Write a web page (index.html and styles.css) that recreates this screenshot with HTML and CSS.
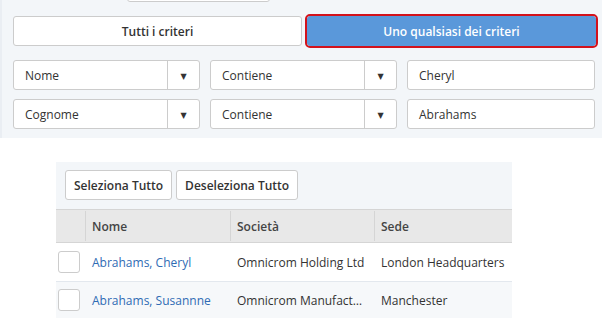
FILE: index.html
```html
<!DOCTYPE html>
<html>
<head>
    <title>Ricerca contatti</title>
    <link rel="stylesheet" href="styles.css">
</head>
<body>
    <div class="filter-panel">
        <div class="prev-btn"></div>

        <div class="match-toggle">
            <button class="toggle-btn">Tutti i criteri</button>
            <button class="toggle-btn active">Uno qualsiasi dei criteri</button>
        </div>

        <div class="criteria">
            <div class="criteria-row">
                <div class="select"><span class="select-label">Nome</span><span class="select-arrow">&#9660;</span></div>
                <div class="select"><span class="select-label">Contiene</span><span class="select-arrow">&#9660;</span></div>
                <div class="text-input">Cheryl</div>
            </div>
            <div class="criteria-row">
                <div class="select"><span class="select-label">Cognome</span><span class="select-arrow">&#9660;</span></div>
                <div class="select"><span class="select-label">Contiene</span><span class="select-arrow">&#9660;</span></div>
                <div class="text-input">Abrahams</div>
            </div>
        </div>
    </div>

    <div class="results">
        <div class="toolbar">
            <button class="tool-btn">Seleziona Tutto</button>
            <button class="tool-btn">Deseleziona Tutto</button>
        </div>
        <table class="grid">
            <colgroup>
                <col class="col-check">
                <col class="col-name">
                <col class="col-company">
                <col class="col-site">
            </colgroup>
            <thead>
                <tr>
                    <th></th>
                    <th>Nome</th>
                    <th>Società</th>
                    <th>Sede</th>
                </tr>
            </thead>
            <tbody>
                <tr class="row-first">
                    <td class="cell-check"><span class="checkbox"></span></td>
                    <td><a href="#">Abrahams, Cheryl</a></td>
                    <td>Omnicrom Holding Ltd</td>
                    <td>London Headquarters</td>
                </tr>
                <tr class="row-alt">
                    <td class="cell-check"><span class="checkbox"></span></td>
                    <td><a href="#">Abrahams, Susannne</a></td>
                    <td>Omnicrom Manufacturing Ltd</td>
                    <td>Manchester</td>
                </tr>
            </tbody>
        </table>
    </div>
</body>
</html>
```

FILE: styles.css
```css
body {
    margin: 0;
    font-family: "Open Sans", "DejaVu Sans", sans-serif;
    font-size: 12px;
    color: #333;
    background: #fff;
}
.filter-panel {
    background: #f3f6f9;
    border-left: 2px solid #eaeef3;
    padding: 0 6px 9px 11px;
}
.prev-btn {
    width: 141px;
    height: 28px;
    margin: -28px 0 0 114px;
    background: #fff;
    border: 1px solid #ccc;
    border-radius: 3px;
}
.match-toggle {
    display: grid;
    grid-template-columns: 1fr 1fr;
    gap: 5px;
    margin-top: 14px;
}
.toggle-btn {
    height: 30px;
    font-family: inherit;
    font-size: 12px;
    font-weight: 600;
    color: #333;
    background: #fff;
    border: 1px solid #ccc;
    border-radius: 3px;
}
.toggle-btn.active {
    background: #5a98da;
    border-color: #5a98da;
    color: #fff;
    outline: 2px solid #d3121b;
    outline-offset: 0;
}
.criteria {
    margin-top: 14px;
    display: flex;
    flex-direction: column;
    gap: 9px;
}
.criteria-row {
    display: grid;
    grid-template-columns: 187px 187px 188px;
    gap: 10px;
}
.select, .text-input {
    height: 30px;
    box-sizing: border-box;
    background: #fff;
    border: 1px solid #ccc;
    border-radius: 3px;
    display: flex;
    align-items: center;
}
.select-label {
    flex: 1;
    padding-left: 11px;
}
.select-arrow {
    width: 31px;
    height: 100%;
    border-left: 1px solid #ccc;
    display: flex;
    align-items: center;
    justify-content: center;
    font-size: 8px;
    color: #333;
}
.text-input {
    padding-left: 11px;
}
.results {
    width: 456px;
    margin: 24px 0 0 56px;
}
.toolbar {
    background: #f3f6f9;
    padding: 8px 9px 9px;
    display: flex;
    gap: 4px;
}
.tool-btn {
    height: 30px;
    padding: 0 8px;
    font-family: inherit;
    font-size: 12px;
    font-weight: 600;
    color: #333;
    background: #fff;
    border: 1px solid #ccc;
    border-radius: 3px;
}
.grid {
    width: 456px;
    border-collapse: collapse;
    table-layout: fixed;
}
.col-check { width: 29px; }
.col-name { width: 145px; }
.col-company { width: 144px; }
.col-site { width: 138px; }
.grid th {
    height: 32px;
    background: #e8e8e8;
    border-top: 1px solid #d5d5d5;
    border-bottom: 1px solid #d5d5d5;
    text-align: left;
    font-weight: 600;
    color: #444;
    padding: 0 7px;
    background-image: linear-gradient(#d5d5d5, #d5d5d5);
    background-size: 1px 30px;
    background-position: 0 center;
    background-repeat: no-repeat;
}
.grid th:first-child {
    background-image: none;
}
.grid td {
    padding: 0 7px;
    white-space: nowrap;
    overflow: hidden;
    text-overflow: ellipsis;
}
.grid td.cell-check {
    padding: 0 0 0 2px;
}
.row-first td {
    height: 38px;
    border-bottom: 1px solid #e3e8ee;
}
.row-alt td {
    height: 36px;
    background: #f6f8fa;
}
.checkbox {
    display: block;
    width: 20px;
    height: 20px;
    background: #fff;
    border: 1px solid #ccc;
    border-radius: 3px;
}
.grid a {
    color: #2f6bb4;
    text-decoration: none;
}
```
